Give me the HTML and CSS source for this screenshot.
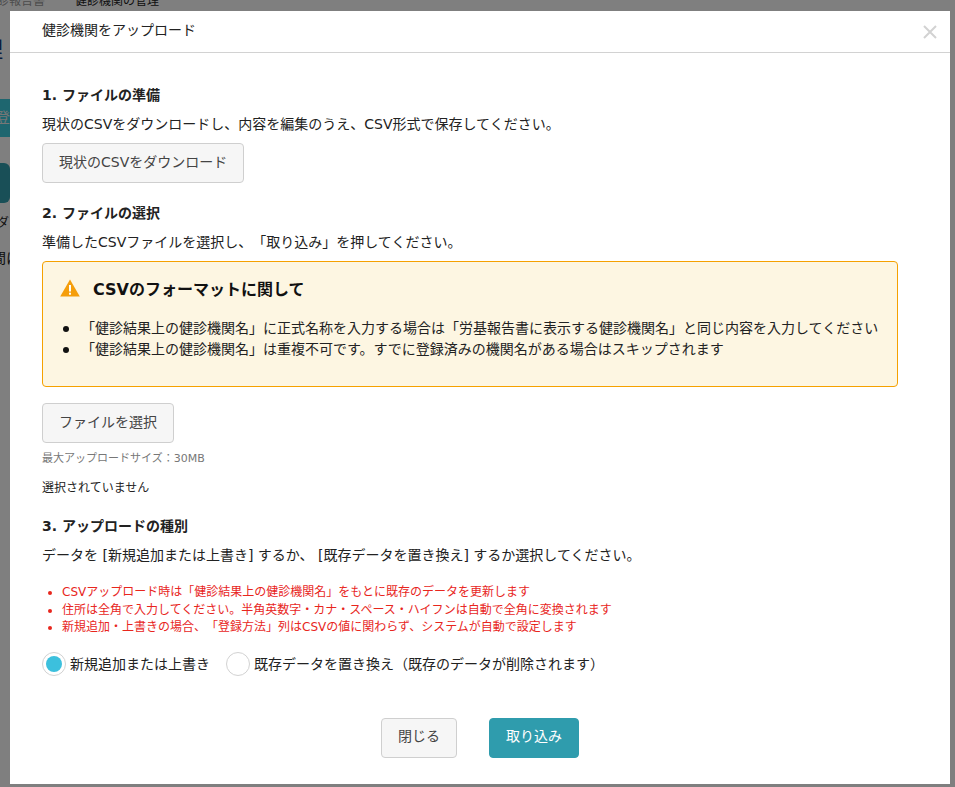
FILE: index.html
```html
<!DOCTYPE html>
<html lang="ja">
<head>
    <meta charset="UTF-8">
    <meta name="viewport" content="width=device-width, initial-scale=1.0">
    <title>健診機関をアップロード</title>
    <link rel="stylesheet" href="styles.css">
</head>
<body>

<!-- Page behind the modal -->
<div class="page">
    <div class="crumbs"><span class="crumb-link">健診報告書</span><span>健診機関の管理</span></div>
    <div class="page-title">管理</div>
    <div class="page-btn">登録</div>
    <div class="page-btn-dark"></div>
    <div class="page-note">ダウ</div>
    <div class="page-text">期間に</div>
</div>
<div class="backdrop"></div>

<div class="modal">
    <div class="modal-header">
        <span class="modal-title">健診機関をアップロード</span>
        <svg class="close" width="14" height="14" viewBox="0 0 14 14">
            <path d="M1 1L13 13M13 1L1 13" stroke="#d2d2d2" stroke-width="2" fill="none"/>
        </svg>
    </div>

    <div class="modal-body">
        <h3 class="step-first">1. ファイルの準備</h3>
        <p class="line">現状のCSVをダウンロードし、内容を編集のうえ、CSV形式で保存してください。</p>
        <button class="btn btn-download">現状のCSVをダウンロード</button>

        <h3 class="step-second">2. ファイルの選択</h3>
        <p class="line">準備したCSVファイルを選択し、「取り込み」を押してください。</p>

        <div class="notice">
            <div class="notice-head">
                <svg width="20" height="18" viewBox="0 0 20 18">
                    <path d="M10 0.5L19.8 17.5H0.2Z" fill="#f59e0b"/>
                    <rect x="9" y="6" width="2" height="6.5" fill="#fff"/>
                    <rect x="9" y="13.7" width="2" height="2" fill="#fff"/>
                </svg>
                <span>CSVのフォーマットに関して</span>
            </div>
            <ul class="notice-list">
                <li>「健診結果上の健診機関名」に正式名称を入力する場合は「労基報告書に表示する健診機関名」と同じ内容を入力してください</li>
                <li>「健診結果上の健診機関名」は重複不可です。すでに登録済みの機関名がある場合はスキップされます</li>
            </ul>
        </div>

        <button class="btn btn-file">ファイルを選択</button>
        <p class="hint">最大アップロードサイズ：30MB</p>
        <p class="no-file">選択されていません</p>

        <h3 class="step-third">3. アップロードの種別</h3>
        <p class="line">データを [新規追加または上書き] するか、 [既存データを置き換え] するか選択してください。</p>

        <ul class="warn-list">
            <li>CSVアップロード時は「健診結果上の健診機関名」をもとに既存のデータを更新します</li>
            <li>住所は全角で入力してください。半角英数字・カナ・スペース・ハイフンは自動で全角に変換されます</li>
            <li>新規追加・上書きの場合、「登録方法」列はCSVの値に関わらず、システムが自動で設定します</li>
        </ul>

        <div class="radios">
            <label class="radio"><span class="radio-mark checked"></span>新規追加または上書き</label>
            <label class="radio"><span class="radio-mark"></span>既存データを置き換え（既存のデータが削除されます）</label>
        </div>
    </div>

    <div class="modal-footer">
        <button class="btn btn-close">閉じる</button>
        <button class="btn btn-primary">取り込み</button>
    </div>
</div>

</body>
</html>
```

FILE: styles.css
```css
* {
    box-sizing: border-box;
}

html, body {
    height: 100%;
}

body {
    font-family: "DejaVu Sans", "Noto Sans CJK JP", sans-serif;
    font-size: 14px;
    color: #222;
    margin: 0;
    padding: 0;
    overflow: hidden;
    background-color: #fff;
    text-spacing-trim: space-all;
}

/* Page behind the modal */
.page {
    height: 787px;
    overflow: hidden;
}

.crumbs {
    display: flex;
    gap: 30px;
    font-size: 12px;
    line-height: 12px;
    margin-top: -5px;
    margin-left: -15px;
    color: #222;
}

.crumb-link {
    color: #999;
}

.page-title {
    font-size: 22px;
    line-height: 24px;
    margin-top: 31px;
    margin-left: -41px;
    color: #123a80;
}

.page-btn {
    width: 40px;
    height: 38px;
    margin-top: 37px;
    margin-left: -16px;
    border-radius: 4px;
    padding-left: 12px;
    font-size: 14px;
    line-height: 36px;
    color: #eee;
    background-color: #3cccdf;
}

.page-btn-dark {
    width: 40px;
    height: 40px;
    margin-top: 26px;
    margin-left: -30px;
    border-radius: 6px;
    background-color: #329eae;
}

.page-note {
    font-size: 12px;
    line-height: 14px;
    margin-top: 13px;
    margin-left: -3px;
}

.page-text {
    font-size: 14px;
    line-height: 16px;
    margin-top: 20px;
    margin-left: -22px;
}

.backdrop {
    position: fixed;
    top: 0;
    left: 0;
    width: 100%;
    height: 100%;
    background-color: rgba(0, 0, 0, 0.5);
}

.modal {
    position: fixed;
    top: 11px;
    left: 10px;
    width: 940px;
    height: 773px;
    background-color: #fff;
}

.modal-header {
    display: flex;
    justify-content: space-between;
    align-items: center;
    height: 42px;
    padding: 0 13px 4px 32px;
    border-bottom: 1px solid #d2d2d2;
}

.modal-title {
    line-height: 20px;
}

.close {
    margin-top: 4px;
}

.modal-body {
    padding: 0 32px;
}

h3 {
    font-size: 14px;
    line-height: 20px;
    font-weight: bold;
    margin: 0;
}

.step-first {
    margin-top: 32px;
}

.step-second {
    margin-top: 20px;
}

.step-third {
    margin-top: 19px;
}

.line {
    line-height: 20px;
    margin: 9px 0 0;
}

.btn {
    display: block;
    height: 40px;
    font-family: inherit;
    font-size: 14px;
    color: #444;
    background-color: #f6f6f6;
    border: 1px solid #cfcfcf;
    border-radius: 4px;
    padding: 0 16px 5px;
}

.btn-download {
    margin-top: 9px;
}

.notice {
    width: 856px;
    height: 126px;
    margin-top: 9px;
    padding: 15px 10px 16px 17px;
    background-color: #fdf6e2;
    border: 1px solid #f5a100;
    border-radius: 4px;
}

.notice-head {
    display: flex;
    align-items: center;
    gap: 13px;
    height: 22px;
    font-size: 16px;
    font-weight: bold;
    color: #111;
}

.notice-list {
    list-style: none;
    margin: 19px 0 0;
    padding-left: 21px;
    line-height: 21px;
}

.notice-list li {
    position: relative;
}

/* Bigger dot than the default marker */
.notice-list li::before {
    content: "";
    position: absolute;
    top: 8px;
    left: -18px;
    width: 6px;
    height: 6px;
    border-radius: 50%;
    background-color: #111;
}

.btn-file {
    margin-top: 16px;
}

.hint {
    font-size: 11px;
    line-height: 16px;
    color: #777;
    margin: 8px 0 0;
}

.no-file {
    font-size: 12px;
    line-height: 18px;
    margin: 12px 0 0;
}

.warn-list {
    color: #e8261d;
    font-size: 12px;
    line-height: 17.5px;
    margin: 19px 0 0;
    padding-left: 20px;
}

.radios {
    display: flex;
    gap: 16px;
    margin-top: 15px;
}

.radio {
    display: flex;
    align-items: center;
    gap: 4px;
    line-height: 24px;
}

.radio-mark {
    display: flex;
    width: 24px;
    height: 24px;
    border: 1px solid #d2d2d2;
    border-radius: 50%;
    background-color: #fff;
}

.radio-mark.checked::before {
    content: "";
    width: 16px;
    height: 16px;
    margin: 3px;
    border-radius: 50%;
    background-color: #3cc0dd;
}

.modal-footer {
    display: flex;
    justify-content: center;
    gap: 32px;
    margin-top: 42px;
}

.btn-primary {
    color: #fff;
    background-color: #2f9cad;
    border-color: #2f9cad;
}
```
